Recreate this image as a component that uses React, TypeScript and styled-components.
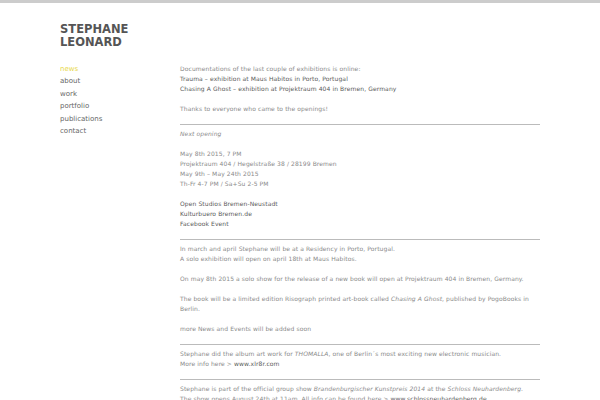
import React from 'react';
import styled, { createGlobalStyle } from 'styled-components';

const GlobalStyle = createGlobalStyle`
  html, body {
    margin: 0;
    padding: 0;
    background: #ffffff;
  }
  body {
    font-family: 'DejaVu Sans', Verdana, sans-serif;
    font-size: 6px;
    letter-spacing: 0.1px;
    line-height: 10px;
    color: #8a8a8a;
  }
`;

const Page = styled.div`
  border-top: 3px solid #cccccc;
  height: 397px;
  overflow: hidden;
`;

const Layout = styled.div`
  display: grid;
  grid-template-columns: 120px 360px;
  padding: 20px 0 0 60px;
`;

const Logo = styled.h1`
  grid-column: 1 / 3;
  margin: 0 0 15px;
  font-size: 11.5px;
  line-height: 13px;
  font-weight: bold;
  color: #555555;
  letter-spacing: 0;
`;

const Nav = styled.ul`
  list-style: none;
  margin: 0;
  padding: 0;
  display: flex;
  flex-direction: column;
  gap: 2.4px;
`;

const NavItem = styled.li<{ $active?: boolean }>`
  font-size: 7px;
  letter-spacing: 0;
  line-height: 10px;
  color: ${(p) => (p.$active ? '#e8d84a' : '#666666')};
`;

const Content = styled.div`
  display: flex;
  flex-direction: column;
`;

const Para = styled.p`
  margin: 0 0 10px;
`;

const Link = styled.span`
  color: #5a5a5a;
`;

const Rule = styled.hr`
  border: 0;
  border-top: 1px solid #bbbbbb;
  margin: 0 0 4px;
`;

export default function App() {
  return (
    <Page>
      <GlobalStyle />
      <Layout>
        <Logo>
          STEPHANE
          <br />
          LEONARD
        </Logo>
        <Nav>
          <NavItem $active>news</NavItem>
          <NavItem>about</NavItem>
          <NavItem>work</NavItem>
          <NavItem>portfolio</NavItem>
          <NavItem>publications</NavItem>
          <NavItem>contact</NavItem>
        </Nav>
        <Content>
          <Para>
            Documentations of the last couple of exhibitions is online:
            <br />
            <Link>Trauma – exhibition at Maus Habitos in Porto, Portugal</Link>
            <br />
            <Link>Chasing A Ghost – exhibition at Projektraum 404 in Bremen, Germany</Link>
          </Para>
          <Para>Thanks to everyone who came to the openings!</Para>
          <Rule />
          <Para>
            <em>Next opening</em>
          </Para>
          <Para>
            May 8th 2015, 7 PM
            <br />
            Projektraum 404 / Hegelstraße 38 / 28199 Bremen
            <br />
            May 9th – May 24th 2015
            <br />
            Th-Fr 4-7 PM / Sa+Su 2-5 PM
          </Para>
          <Para>
            <Link>Open Studios Bremen-Neustadt</Link>
            <br />
            <Link>Kulturbuero Bremen.de</Link>
            <br />
            <Link>Facebook Event</Link>
          </Para>
          <Rule />
          <Para>
            In march and april Stephane will be at a Residency in Porto, Portugal.
            <br />
            A solo exhibition will open on april 18th at Maus Habitos.
          </Para>
          <Para>
            On may 8th 2015 a solo show for the release of a new book will open at Projektraum 404 in Bremen, Germany.
          </Para>
          <Para>
            The book will be a limited edition Risograph printed art-book called <em>Chasing A Ghost</em>, published by PogoBooks in Berlin.
          </Para>
          <Para>more News and Events will be added soon</Para>
          <Rule />
          <Para>
            Stephane did the album art work for <em>THOMALLA</em>, one of Berlin´s most exciting new electronic musician.
            <br />
            More info here &gt; <Link>www.xlr8r.com</Link>
          </Para>
          <Rule />
          <Para>
            Stephane is part of the official group show <em>Brandenburgischer Kunstpreis 2014</em> at the{' '}
            <em>Schloss Neuhardenberg</em>.
            <br />
            The show opens August 24th at 11am. All info can be found here &gt; <Link>www.schlossneuhardenberg.de</Link>
          </Para>
        </Content>
      </Layout>
    </Page>
  );
}
